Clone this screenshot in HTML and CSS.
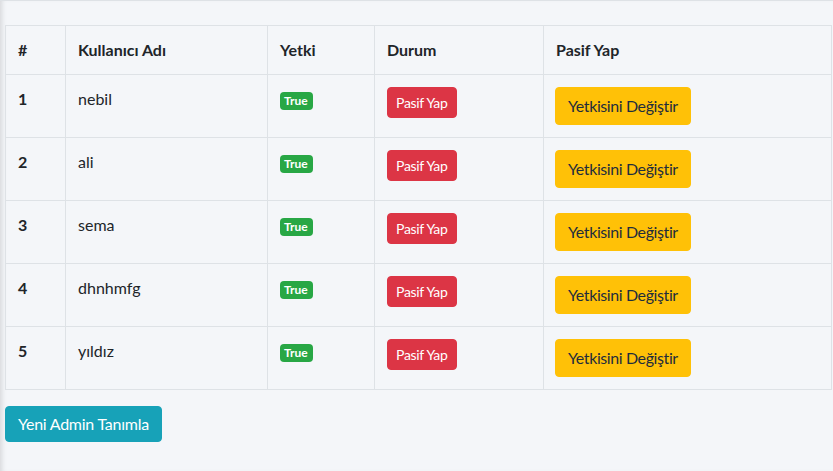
FILE: index.html
```html
<!DOCTYPE html>
<html lang="tr">
<head>
<meta charset="utf-8">
<title>Adminler</title>
<link rel="stylesheet" href="styles.css">
</head>
<body>
<div class="content">
  <table class="table">
    <colgroup>
      <col class="c-num"><col class="c-user"><col class="c-role"><col class="c-state"><col class="c-act">
    </colgroup>
    <thead>
      <tr><th>#</th><th>Kullanıcı Adı</th><th>Yetki</th><th>Durum</th><th>Pasif Yap</th></tr>
    </thead>
    <tbody>
      <tr><th>1</th><td>nebil</td><td><span class="badge">True</span></td><td><button class="btn btn-danger">Pasif Yap</button></td><td><button class="btn btn-warning">Yetkisini Değiştir</button></td></tr>
      <tr><th>2</th><td>ali</td><td><span class="badge">True</span></td><td><button class="btn btn-danger">Pasif Yap</button></td><td><button class="btn btn-warning">Yetkisini Değiştir</button></td></tr>
      <tr><th>3</th><td>sema</td><td><span class="badge">True</span></td><td><button class="btn btn-danger">Pasif Yap</button></td><td><button class="btn btn-warning">Yetkisini Değiştir</button></td></tr>
      <tr><th>4</th><td>dhnhmfg</td><td><span class="badge">True</span></td><td><button class="btn btn-danger">Pasif Yap</button></td><td><button class="btn btn-warning">Yetkisini Değiştir</button></td></tr>
      <tr><th>5</th><td>yıldız</td><td><span class="badge">True</span></td><td><button class="btn btn-danger">Pasif Yap</button></td><td><button class="btn btn-warning">Yetkisini Değiştir</button></td></tr>
    </tbody>
  </table>
  <button class="btn btn-info">Yeni Admin Tanımla</button>
</div>
</body>
</html>
```
FILE: styles.css
```css
html, body {
  margin: 0;
  padding: 0;
  height: 100%;
}
body {
  background: #f4f6f9;
  font-family: "Lato", "Liberation Sans", sans-serif;
  font-size: 16px;
  line-height: 1.5;
  color: #212529;
  border-top: 1px solid #dee2e6;
  box-sizing: border-box;
  box-shadow: inset 5px 0 5px -3px rgba(0,0,0,0.12);
}
.content {
  padding: 24px 2px 0 5px;
}
.table {
  width: 826px;
  border-collapse: collapse;
  table-layout: fixed;
  margin-bottom: 16px;
  border: 1px solid #dee2e6;
}
.c-num { width: 60px; }
.c-user { width: 202px; }
.c-role { width: 107px; }
.c-state { width: 169px; }
.c-act { width: 288px; }
.table th, .table td {
  border: 1px solid #dee2e6;
  padding: 12px;
  text-align: left;
  vertical-align: top;
}
.table thead th {
  font-weight: 700;
  padding: 12px;
}
.table tbody th { font-weight: 700; }
.badge {
  display: inline-block;
  background: #28a745;
  color: #fff;
  font-size: 12px;
  font-weight: 700;
  line-height: 1;
  padding: 3px 5px 3px 4px;
  border-radius: 4px;
  vertical-align: 0;
}
.btn {
  font-family: inherit;
  display: inline-block;
  border: 1px solid transparent;
  border-radius: 4px;
  font-size: 16px;
  line-height: 24px;
  padding: 6px 12px;
  cursor: pointer;
}
.btn-danger {
  background: #dc3545;
  border-color: #dc3545;
  color: #fff;
  font-size: 14px;
  line-height: 21px;
  padding: 4px 8px;
  letter-spacing: -0.3px;
}
.btn-warning {
  background: #ffc107;
  border-color: #ffc107;
  color: #1f2d3d;
  letter-spacing: -0.4px;
  margin-left: -1px;
}
.btn-info {
  background: #17a2b8;
  border-color: #17a2b8;
  color: #fff;
  padding: 5px 12px;
  letter-spacing: -0.25px;
}
```
